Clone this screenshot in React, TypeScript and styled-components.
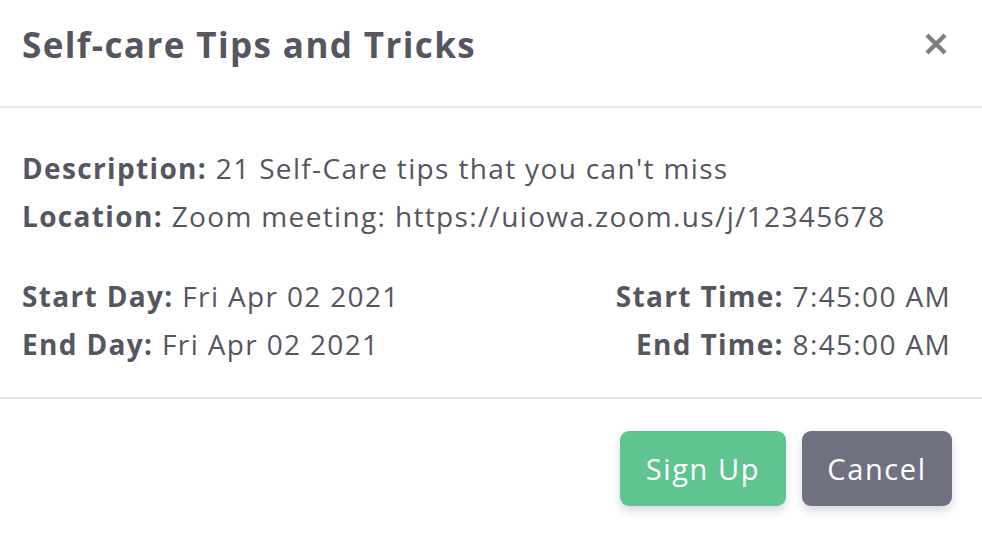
import React from "react";
import styled, { createGlobalStyle } from "styled-components";

const Global = createGlobalStyle`
  html, body { margin: 0; padding: 0; background: #fff; }
  body { font-family: "Open Sans", "Lato", sans-serif; color: #55565f; }
  * { box-sizing: border-box; }
`;

const Modal = styled.div`
  width: 982px;
  height: 536px;
  background: #fff;
  display: flex;
  flex-direction: column;
`;

const Header = styled.div`
  height: 108px;
  padding: 0 34px 0 22px;
  display: flex;
  align-items: center;
  justify-content: space-between;
  border-bottom: 2px solid #e3e6f0;
`;

const Title = styled.h2`
  margin: 0;
  font-size: 35px;
  font-weight: 700;
  letter-spacing: 1.4px;
  color: #55565f;
  line-height: 1;
  padding-bottom: 18px;
`;

const Close = styled.button`
  border: 0;
  background: none;
  padding: 0;
  margin: 0 0 18px;
  width: 24px;
  height: 24px;
  display: flex;
  cursor: pointer;
`;

const Body = styled.div`
  height: 291px;
  padding: 36px 31px 0 22px;
  border-bottom: 2px solid #e3e6f0;
  font-size: 28px;
  letter-spacing: 1.35px;
`;

const Line = styled.div`
  line-height: 48px;
  white-space: nowrap;
`;

const Label = styled.b`
  font-weight: 700;
`;

const Grid = styled.div`
  margin-top: 32px;
  display: grid;
  grid-template-columns: 1fr 1fr;
`;

const Col = styled.div<{ $right?: boolean }>`
  text-align: ${(p) => (p.$right ? "right" : "left")};
`;

const Footer = styled.div`
  flex: 1;
  padding: 32px 30px 0;
  display: flex;
  justify-content: flex-end;
  align-items: flex-start;
  gap: 16px;
`;

const Btn = styled.button<{ $bg: string; $w: number }>`
  width: ${(p) => p.$w}px;
  height: 75px;
  border: 0;
  border-radius: 9px;
  background: ${(p) => p.$bg};
  color: #fff;
  font-family: inherit;
  font-size: 29px;
  letter-spacing: 1.6px;
  box-shadow: 0 5px 10px rgba(0, 0, 0, 0.15);
  cursor: pointer;
`;

export default function App() {
  return (
    <>
      <Global />
      <Modal>
        <Header>
          <Title>Self-care Tips and Tricks</Title>
          <Close aria-label="Close">
            <svg width="24" height="24" viewBox="0 0 24 24">
              <path d="M3 3 L21 21 M21 3 L3 21" stroke="#7f7f84" strokeWidth="4.5" strokeLinecap="butt" />
            </svg>
          </Close>
        </Header>
        <Body>
          <Line><Label>Description:</Label> 21 Self-Care tips that you can't miss</Line>
          <Line><Label>Location:</Label> Zoom meeting: https://uiowa.zoom.us/j/12345678</Line>
          <Grid>
            <Col>
              <Line><Label>Start Day:</Label> Fri Apr 02 2021</Line>
              <Line><Label>End Day:</Label> Fri Apr 02 2021</Line>
            </Col>
            <Col $right>
              <Line><Label>Start Time:</Label> 7:45:00 AM</Line>
              <Line><Label>End Time:</Label> 8:45:00 AM</Line>
            </Col>
          </Grid>
        </Body>
        <Footer>
          <Btn $bg="#5ec591" $w={166}>Sign Up</Btn>
          <Btn $bg="#6f7080" $w={150}>Cancel</Btn>
        </Footer>
      </Modal>
    </>
  );
}
